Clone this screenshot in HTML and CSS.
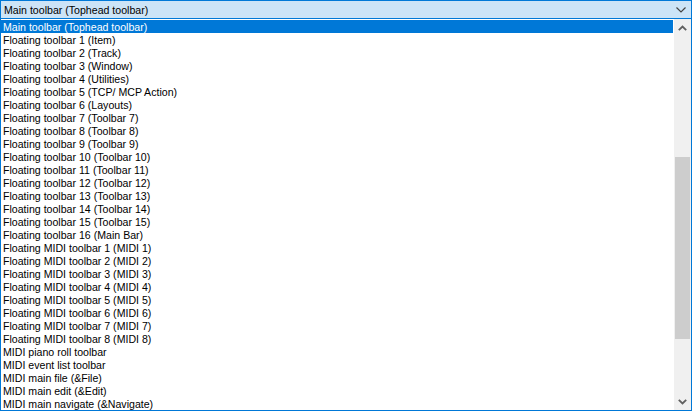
FILE: index.html
```html
<!DOCTYPE html>
<html>
<head>
<meta charset="utf-8">
<link rel="stylesheet" href="styles.css">
</head>
<body>
<div class="combo">
  <span class="combo-text">Main toolbar (Tophead toolbar)</span>
  <svg class="combo-arrow" width="10" height="6" viewBox="0 0 10 6"><path d="M0.5 0.5 L5 5 L9.5 0.5" fill="none" stroke="#444" stroke-width="1.2"/></svg>
</div>
<div class="dropdown">
  <ul class="list">
    <li class="item selected">Main toolbar (Tophead toolbar)</li>
    <li class="item">Floating toolbar 1 (Item)</li>
    <li class="item">Floating toolbar 2 (Track)</li>
    <li class="item">Floating toolbar 3 (Window)</li>
    <li class="item">Floating toolbar 4 (Utilities)</li>
    <li class="item">Floating toolbar 5 (TCP/ MCP Action)</li>
    <li class="item">Floating toolbar 6 (Layouts)</li>
    <li class="item">Floating toolbar 7 (Toolbar 7)</li>
    <li class="item">Floating toolbar 8 (Toolbar 8)</li>
    <li class="item">Floating toolbar 9 (Toolbar 9)</li>
    <li class="item">Floating toolbar 10 (Toolbar 10)</li>
    <li class="item">Floating toolbar 11 (Toolbar 11)</li>
    <li class="item">Floating toolbar 12 (Toolbar 12)</li>
    <li class="item">Floating toolbar 13 (Toolbar 13)</li>
    <li class="item">Floating toolbar 14 (Toolbar 14)</li>
    <li class="item">Floating toolbar 15 (Toolbar 15)</li>
    <li class="item">Floating toolbar 16 (Main Bar)</li>
    <li class="item">Floating MIDI toolbar 1 (MIDI 1)</li>
    <li class="item">Floating MIDI toolbar 2 (MIDI 2)</li>
    <li class="item">Floating MIDI toolbar 3 (MIDI 3)</li>
    <li class="item">Floating MIDI toolbar 4 (MIDI 4)</li>
    <li class="item">Floating MIDI toolbar 5 (MIDI 5)</li>
    <li class="item">Floating MIDI toolbar 6 (MIDI 6)</li>
    <li class="item">Floating MIDI toolbar 7 (MIDI 7)</li>
    <li class="item">Floating MIDI toolbar 8 (MIDI 8)</li>
    <li class="item">MIDI piano roll toolbar</li>
    <li class="item">MIDI event list toolbar</li>
    <li class="item">MIDI main file (&amp;File)</li>
    <li class="item">MIDI main edit (&amp;Edit)</li>
    <li class="item">MIDI main navigate (&amp;Navigate)</li>
  </ul>
  <div class="scrollbar">
    <div class="sb-arrow">
      <svg width="9" height="6" viewBox="0 0 9 6"><path d="M0.8 5.2 L4.5 1.5 L8.2 5.2" fill="none" stroke="#606060" stroke-width="1.8"/></svg>
    </div>
    <div class="sb-track">
      <div class="sb-thumb"></div>
    </div>
    <div class="sb-arrow">
      <svg width="9" height="6" viewBox="0 0 9 6"><path d="M0.8 0.8 L4.5 4.5 L8.2 0.8" fill="none" stroke="#606060" stroke-width="1.8"/></svg>
    </div>
  </div>
</div>
</body>
</html>
```
FILE: styles.css
```css
html, body {
  margin: 0;
  padding: 0;
  background: #ffffff;
}
body {
  width: 692px;
  height: 411px;
  overflow: hidden;
  font-family: "Liberation Sans", Arial, sans-serif;
  font-size: 10.6px;
  color: #000000;
}
.combo {
  box-sizing: border-box;
  height: 19px;
  border: 1px solid #0078d7;
  background: #cce4f7;
  display: flex;
  align-items: center;
  justify-content: space-between;
  padding: 1px 5px 0 3px;
}
.combo-text {
  line-height: 13px;
}
.combo-arrow {
  display: block;
}
.dropdown {
  box-sizing: border-box;
  height: 392px;
  border: 1px solid #0078d7;
  border-top: none;
  display: flex;
}
.list {
  list-style: none;
  margin: 0;
  padding: 1px 0 0 0;
  flex: 1;
  min-width: 0;
}
.item {
  height: 13px;
  line-height: 14px;
  padding-left: 2px;
  white-space: nowrap;
  margin-right: 1px;
}
.item.selected {
  background: #0078d7;
  color: #ffffff;
}
.scrollbar {
  width: 17px;
  background: #f0f0f0;
  display: flex;
  flex-direction: column;
}
.sb-arrow {
  height: 17px;
  display: flex;
  align-items: center;
  justify-content: center;
}
.sb-track {
  flex: 1;
  padding: 121px 1px 54px 1px;
  display: flex;
  flex-direction: column;
}
.sb-thumb {
  flex: 1;
  background: #cdcdcd;
}
```
